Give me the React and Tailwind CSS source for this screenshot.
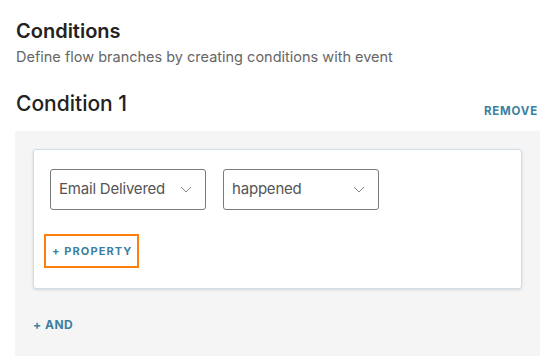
function Chevron() {
  return (
    <svg width="12" height="7" viewBox="0 0 12 7" fill="none" className="text-[#777]">
      <path d="M1 1l5 5 5-5" stroke="currentColor" strokeWidth="0.9" />
    </svg>
  );
}

function Select({ value }) {
  return (
    <div className="w-[156px] h-[41px] border border-[#7a7a7a] rounded-[3px] bg-white flex items-center justify-between pl-[8px] pr-[13px]">
      <span className="text-[15px] tracking-[-0.2px] text-[#555]">{value}</span>
      <Chevron />
    </div>
  );
}

export default function App() {
  return (
    <div className="w-[555px] h-[356px] bg-white px-[15px] pt-[19px] overflow-hidden font-['Inter',sans-serif]">
      {/* Header */}
      <div className="pl-px">
        <h1 className="text-[20px] leading-[24px] font-semibold text-[#222]">Conditions</h1>
        <p className="text-[14.5px] leading-[20px] mt-[4px] text-[#666]">
          Define flow branches by creating conditions with event
        </p>
      </div>

      <div className="flex items-end justify-between pl-px mt-[24px]">
        <h2 className="text-[21px] leading-[26px] font-medium text-[#222]">Condition 1</h2>
        <button className="text-[11.5px] font-bold tracking-[0.07em] text-[#3b7fa1] mr-[2px] mb-[-3px]">
          REMOVE
        </button>
      </div>

      {/* Condition panel */}
      <div className="mt-[14px] bg-[#f5f5f5] rounded-[3px] px-[18px] pt-[18px] pb-[30px]">
        <div className="bg-white border border-[#cfdde8] rounded-[3px] shadow-[0_1px_3px_rgba(0,0,0,0.12)] px-[16px] pt-[19px] pb-[20px]">
          <div className="flex gap-[17px]">
            <Select value="Email Delivered" />
            <Select value="happened" />
          </div>
          <div className="mt-[24px] -ml-[6px]">
            <button className="h-[34px] border-2 border-[#ff7f0e] pl-[6px] pr-[5px] text-[11px] font-bold tracking-[0.1em] text-[#3b7fa1]">
              + PROPERTY
            </button>
          </div>
        </div>
        <button className="mt-[27px] text-[12px] font-bold tracking-[0.04em] text-[#3b7fa1]">
          + AND
        </button>
      </div>
    </div>
  );
}
